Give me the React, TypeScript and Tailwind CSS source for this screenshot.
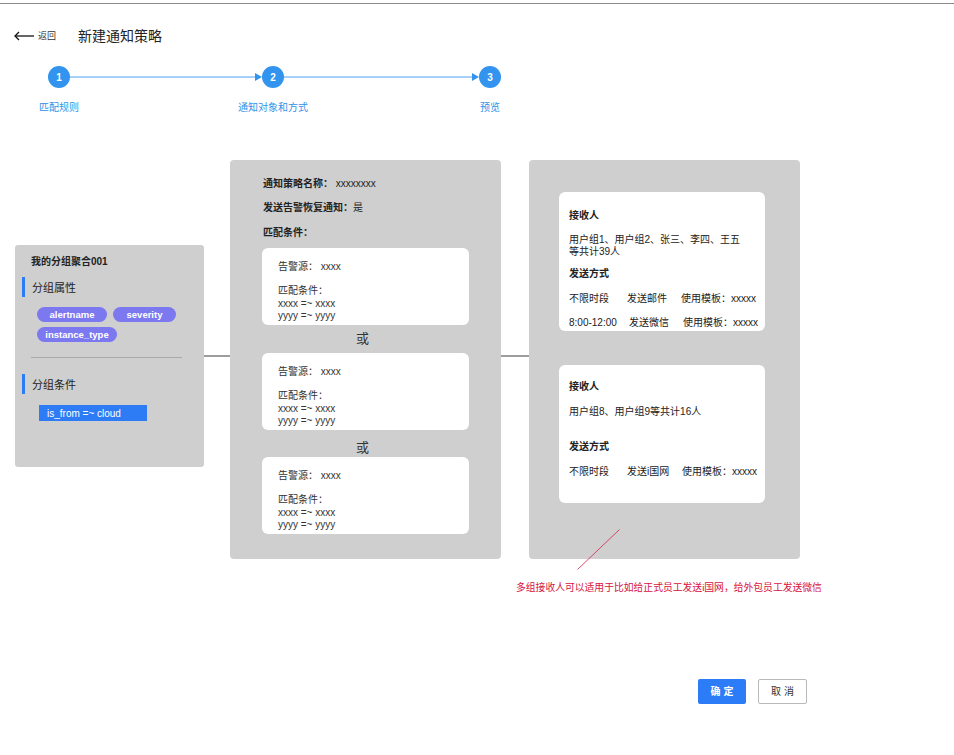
import React from 'react';

const FONT = 'font-["Liberation_Sans","Noto_Sans_CJK_SC",sans-serif]';

const Step = ({ n }: { n: number }) => (
  <div className="w-[22px] h-[22px] rounded-full bg-[#3294ee] flex items-center justify-center text-white text-[10px] font-bold shrink-0">
    {n}
  </div>
);

const StepLine = ({ w }: { w: number }) => (
  <svg width={w} height="10" viewBox={`0 0 ${w} 10`} className="shrink-0">
    <line x1="0" y1="5" x2={w - 2} y2="5" stroke="#4aa0f0" strokeWidth="1" />
    <polygon points={`${w - 7},1 ${w},5 ${w - 7},9`} fill="#3294ee" />
  </svg>
);

const MatchCard = () => (
  <div className="ml-[32px] w-[207px] h-[77px] bg-white rounded-[6px] pl-[16px] pt-[12px] text-[10px] text-[#333]">
    <div className="leading-[14px]">告警源：&nbsp;xxxx</div>
    <div className="leading-[14px] mt-[10px]">匹配条件：</div>
    <div className="leading-[12px]">xxxx =~ xxxx</div>
    <div className="leading-[12px]">yyyy =~ yyyy</div>
  </div>
);

const Pill = ({ label, w }: { label: string; w: string }) => (
  <span className={`h-[15px] ${w} rounded-full bg-[#7b78f0] text-white text-[9.5px] font-bold leading-[15px] inline-block text-center`}>
    {label}
  </span>
);

const SideHead = ({ label }: { label: string }) => (
  <div className="flex items-center h-[20px] pl-[7px]">
    <div className="w-[3px] h-[20px] bg-[#2b7cf6]" />
    <span className="ml-[7px] text-[11px] leading-[20px] pt-[2px] text-[#222]">{label}</span>
  </div>
);

export default function App() {
  return (
    <div className={`relative w-[954px] h-[755px] bg-white overflow-hidden ${FONT}`}>
      <div className="mt-[3px] border-t border-[#8c8c8c]" />

      {/* Header */}
      <div className="flex items-center h-[20px] mt-[22px]">
        <div className="ml-[14px] flex items-center">
          <svg width="20" height="10" viewBox="0 0 20 10">
            <line x1="1" y1="5" x2="20" y2="5" stroke="#111" strokeWidth="1.3" />
            <polyline points="5,1 1,5 5,9" fill="none" stroke="#111" strokeWidth="1.3" />
          </svg>
          <span className="ml-[4px] text-[9px] text-[#333] pt-[1px]">返回</span>
        </div>
        <span className="ml-[22px] text-[14px] text-[#222] pt-[1px]">新建通知策略</span>
      </div>

      {/* Stepper */}
      <div className="flex items-center mt-[20px] pl-[48px]">
        <Step n={1} />
        <StepLine w={192} />
        <Step n={2} />
        <StepLine w={195} />
        <Step n={3} />
      </div>
      <div className="flex mt-[13px] pl-[19px] text-[10px] leading-[14px] text-[#3391e8]">
        <div className="w-[80px] text-center">匹配规则</div>
        <div className="w-[80px] ml-[134px] text-center">通知对象和方式</div>
        <div className="w-[80px] ml-[137px] text-center">预览</div>
      </div>

      {/* Diagram */}
      <div className="flex items-start mt-[45px] pl-[15px]">
        {/* Group panel */}
        <div className="mt-[85px] w-[189px] h-[222px] bg-[#cfcfcf] rounded-[3px] pt-[10px] shrink-0">
          <div className="pl-[16px] text-[10px] leading-[14px] font-bold text-[#222]">我的分组聚合001</div>
          <div className="mt-[8px]">
            <SideHead label="分组属性" />
          </div>
          <div className="mt-[10px] pl-[22px] w-[170px] flex flex-wrap gap-x-[6px] gap-y-[5px]">
            <Pill label="alertname" w="w-[70px]" />
            <Pill label="severity" w="w-[63px]" />
            <Pill label="instance_type" w="w-[80px]" />
          </div>
          <div className="mt-[15px] ml-[16px] w-[151px] h-px bg-[#a9a9a9]" />
          <div className="mt-[16px]">
            <SideHead label="分组条件" />
          </div>
          <div className="mt-[11px] ml-[24px] w-[108px] h-[16px] bg-[#2d7cf6] pl-[8px] text-[10px] leading-[17px] text-white">
            is_from =~ cloud
          </div>
        </div>

        <div className="mt-[195px] w-[26px] h-[2px] bg-[#9d9d9d] shrink-0" />

        {/* Policy panel */}
        <div className="w-[271px] h-[399px] bg-[#cfcfcf] rounded-[4px] pt-[17px] shrink-0">
          <div className="pl-[33px] text-[10px] leading-[14px] text-[#222]">
            <div><span className="font-bold">通知策略名称：</span>&nbsp;xxxxxxxx</div>
            <div className="mt-[10px]"><span className="font-bold">发送告警恢复通知：</span>是</div>
            <div className="mt-[11px] font-bold">匹配条件：</div>
          </div>
          <div className="mt-[8px]">
            <MatchCard />
            <div className="ml-[32px] w-[207px] h-[28px] text-center text-[13px] leading-[18px] text-[#333] pr-[6px] pt-[5px]">或</div>
            <MatchCard />
            <div className="ml-[32px] w-[207px] h-[27px] text-center text-[13px] leading-[18px] text-[#333] pr-[6px] pt-[9px]">或</div>
            <MatchCard />
          </div>
        </div>

        <div className="mt-[195px] w-[28px] h-[2px] bg-[#9d9d9d] shrink-0" />

        {/* Receivers panel */}
        <div className="w-[271px] h-[399px] bg-[#cfcfcf] rounded-[4px] pt-[32px] shrink-0 text-[10px] text-[#222]">
          <div className="ml-[30px] w-[206px] h-[139px] bg-white rounded-[6px] pl-[10px] pt-[17px]">
            <div className="leading-[14px] font-bold">接收人</div>
            <div className="mt-[11px] leading-[12px]">
              用户组1、用户组2、张三、李四、王五
              <br />
              等共计39人
            </div>
            <div className="mt-[9px] leading-[14px] font-bold">发送方式</div>
            <div className="mt-[11px] flex leading-[14px]">
              <span className="w-[58px]">不限时段</span>
              <span className="w-[54px]">发送邮件</span>
              <span>使用模板：xxxxx</span>
            </div>
            <div className="mt-[10px] flex leading-[14px]">
              <span className="w-[60px]">8:00-12:00</span>
              <span className="w-[54px]">发送微信</span>
              <span>使用模板：xxxxx</span>
            </div>
          </div>
          <div className="mt-[34px] ml-[30px] w-[206px] h-[138px] bg-white rounded-[6px] pl-[10px] pt-[15px]">
            <div className="leading-[14px] font-bold">接收人</div>
            <div className="mt-[11px] leading-[14px]">用户组8、用户组9等共计16人</div>
            <div className="mt-[21px] leading-[14px] font-bold">发送方式</div>
            <div className="mt-[11px] flex leading-[14px]">
              <span className="w-[58px]">不限时段</span>
              <span className="w-[55px]">发送i国网</span>
              <span>使用模板：xxxxx</span>
            </div>
          </div>
        </div>
      </div>

      {/* Annotation */}
      <svg className="absolute left-[577px] top-[529px]" width="43" height="41" viewBox="0 0 43 41">
        <line x1="0.5" y1="40.5" x2="42.5" y2="0.5" stroke="#d0244a" strokeWidth="0.8" />
      </svg>
      <div className="mt-[22px] pl-[516px] text-[9.8px] leading-[14px] text-[#d6123f] whitespace-nowrap">
        多组接收人可以适用于比如给正式员工发送i国网，给外包员工发送微信
      </div>

      {/* Actions */}
      <div className="mt-[84px] flex justify-end pr-[147px] gap-[12px]">
        <button className="w-[48px] h-[25px] bg-[#2b7cf6] rounded-[2px] text-white text-[10px] font-bold">确 定</button>
        <button className="w-[49px] h-[25px] border border-[#b9b9b9] rounded-[2px] bg-white text-[#333] text-[10px]">取 消</button>
      </div>
    </div>
  );
}
